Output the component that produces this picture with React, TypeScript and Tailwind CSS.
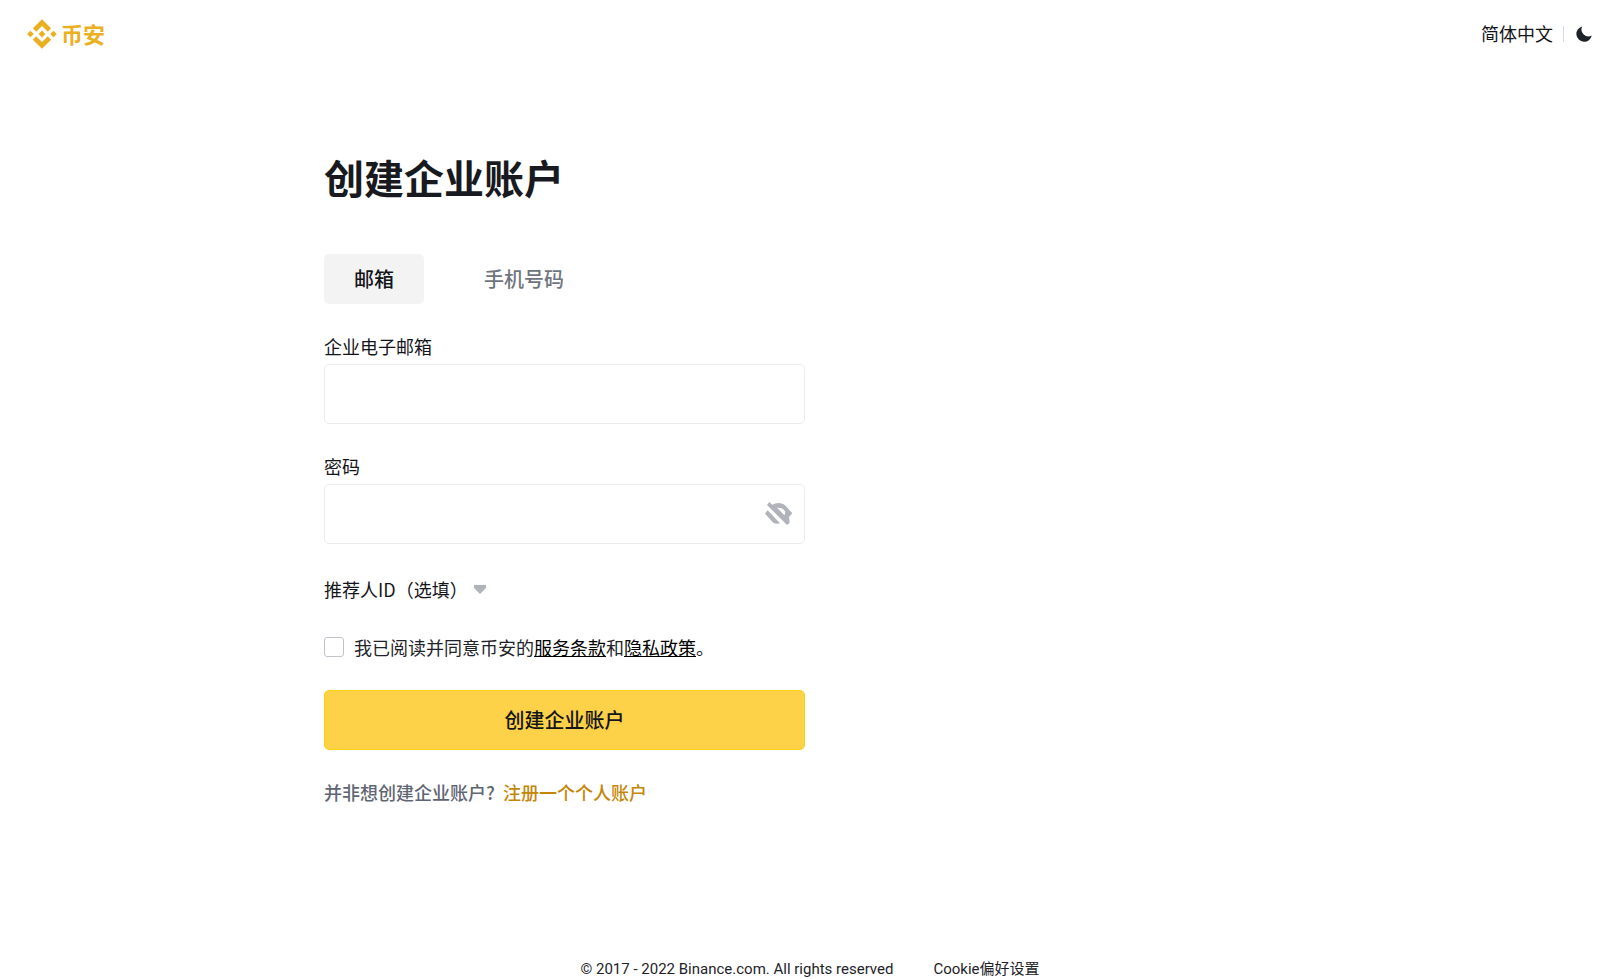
import { useState } from 'react'

const FIELD =
  'block w-full h-[60px] rounded-[5px] border border-[#eaecef] bg-white px-4 text-lg text-[#1e2329] outline-none focus:border-[#f0b90b]'

function Logo() {
  return (
    <a href="#home" aria-label="币安" className="flex items-center gap-1 text-[#ebb01f]">
      <svg viewBox="0 0 126 126" className="w-[30px] h-[30px]" fill="currentColor" aria-hidden="true">
        <path d="M38.7 53.2 63 28.9l24.3 24.3 14.1-14.1L63 .6 24.5 39.1zM.4 63l14.1-14.1L28.7 63 14.5 77.1zM38.7 72.8 63 97.1l24.3-24.3 14.2 14.1L63 125.4 24.5 86.9zM97.3 63l14.2-14.1L125.6 63l-14.1 14.1zM77.4 63 63 48.6 48.6 63 63 77.4z" />
      </svg>
      <span className="pb-0.5 text-[22px] leading-6 font-bold">币安</span>
    </a>
  )
}

function MoonIcon() {
  return (
    <svg viewBox="0 0 16 16" className="w-4 h-4" fill="currentColor" aria-hidden="true">
      <path d="M6.2 .4A7.8 7.8 0 1 0 15.8 9.6 7 7 0 0 1 6.2 .4z" />
    </svg>
  )
}

function EyeOffIcon() {
  return (
    <svg viewBox="0 0 84 72" className="w-7 h-6" fill="currentColor" aria-hidden="true">
      <path
        fillRule="evenodd"
        d="M13 0 22 8Q30 3 40 3Q54 3 63 13L82 34 72 45 74 62 66 69 6 9zM36 17 58 40Q62 34 60 28Q54 16 36 17z"
      />
      <path d="M8 25 45 64Q33 67 25 62L0 35z" />
    </svg>
  )
}

export default function App() {
  const [tab, setTab] = useState<'email' | 'phone'>('email')
  const [visible, setVisible] = useState(false)

  const tabClass = (active: boolean) =>
    `h-[50px] px-[30px] rounded-[5px] text-xl font-medium ${active ? 'bg-[#f3f3f3] text-[#14151a]' : 'text-[#6f757e]'}`

  return (
    <div className="min-h-screen flex flex-col bg-white text-[#14151a] text-lg leading-6 font-['Noto_Sans_CJK_SC',sans-serif]">
      <header className="flex items-center justify-between h-[67px] pl-[27px] pr-2">
        <Logo />
        <div className="flex items-center">
          <button type="button" className="pb-0.5">简体中文</button>
          <span className="w-px h-4 ml-2.5 mr-3 bg-[#d8dce1]" />
          <button type="button" aria-label="深色模式" className="text-[#1e2329]">
            <MoonIcon />
          </button>
        </div>
      </header>

      <main className="w-full max-w-[952px] mx-auto pt-[85px] pb-10">
        <form className="w-full max-w-[481px]" onSubmit={(e) => e.preventDefault()}>
          <h1 className="text-[40px] leading-[50px] font-bold text-[#181a20]">创建企业账户</h1>

          <div role="tablist" className="flex gap-[30px] mt-[52px]">
            <button type="button" role="tab" aria-selected={tab === 'email'} onClick={() => setTab('email')} className={tabClass(tab === 'email')}>
              邮箱
            </button>
            <button type="button" role="tab" aria-selected={tab === 'phone'} onClick={() => setTab('phone')} className={tabClass(tab === 'phone')}>
              手机号码
            </button>
          </div>

          <div className="mt-[30px]">
            <label htmlFor="email" className="block mb-1.5">企业电子邮箱</label>
            <input id="email" type="text" className={FIELD} />
          </div>

          <div className="mt-[30px]">
            <label htmlFor="password" className="block mb-1.5">密码</label>
            <div className="relative">
              <input id="password" type={visible ? 'text' : 'password'} className={FIELD} />
              <button
                type="button"
                aria-label="显示密码"
                onClick={() => setVisible(!visible)}
                className="absolute inset-y-0 right-3 flex items-center text-[#b0b4ba]"
              >
                <EyeOffIcon />
              </button>
            </div>
          </div>

          <button type="button" className="flex items-center gap-1.5 h-7 mt-[31px]">
            推荐人ID（选填）
            <svg viewBox="0 0 12 9" className="w-3 h-[9px] text-[#b0b4ba]" fill="currentColor" aria-hidden="true">
              <path d="M0 0h12v3L6 9 0 3z" />
            </svg>
          </button>

          <div className="flex items-center gap-2.5 mt-8 text-[#1e2329]">
            <input
              id="terms"
              type="checkbox"
              className="appearance-none w-5 h-5 shrink-0 rounded-[3px] border border-[#c0c4ca] bg-white checked:bg-[#fcd535]"
            />
            <label htmlFor="terms">
              我已阅读并同意币安的<a href="#terms-of-use" className="text-black underline">服务条款</a>和<a href="#privacy" className="text-black underline">隐私政策</a>。
            </label>
          </div>

          <button
            type="submit"
            className="w-full h-[60px] mt-[31px] rounded-[5px] border border-[#fcd20f] bg-[#fdd148] text-xl font-medium text-[#14151a]"
          >
            创建企业账户
          </button>

          <p className="mt-[30px] font-medium text-[#5f6673]">
            并非想创建企业账户? <a href="#register" className="ml-1 text-[#c48609]">注册一个个人账户</a>
          </p>
        </form>
      </main>

      <footer className="flex justify-center gap-10 mt-auto pl-5 text-[15px] leading-5 text-[#1e2329] font-[Roboto,'Noto_Sans_CJK_SC',sans-serif]">
        <span>© 2017 - 2022 Binance.com. All rights reserved</span>
        <a href="#cookies">Cookie偏好设置</a>
      </footer>
    </div>
  )
}
